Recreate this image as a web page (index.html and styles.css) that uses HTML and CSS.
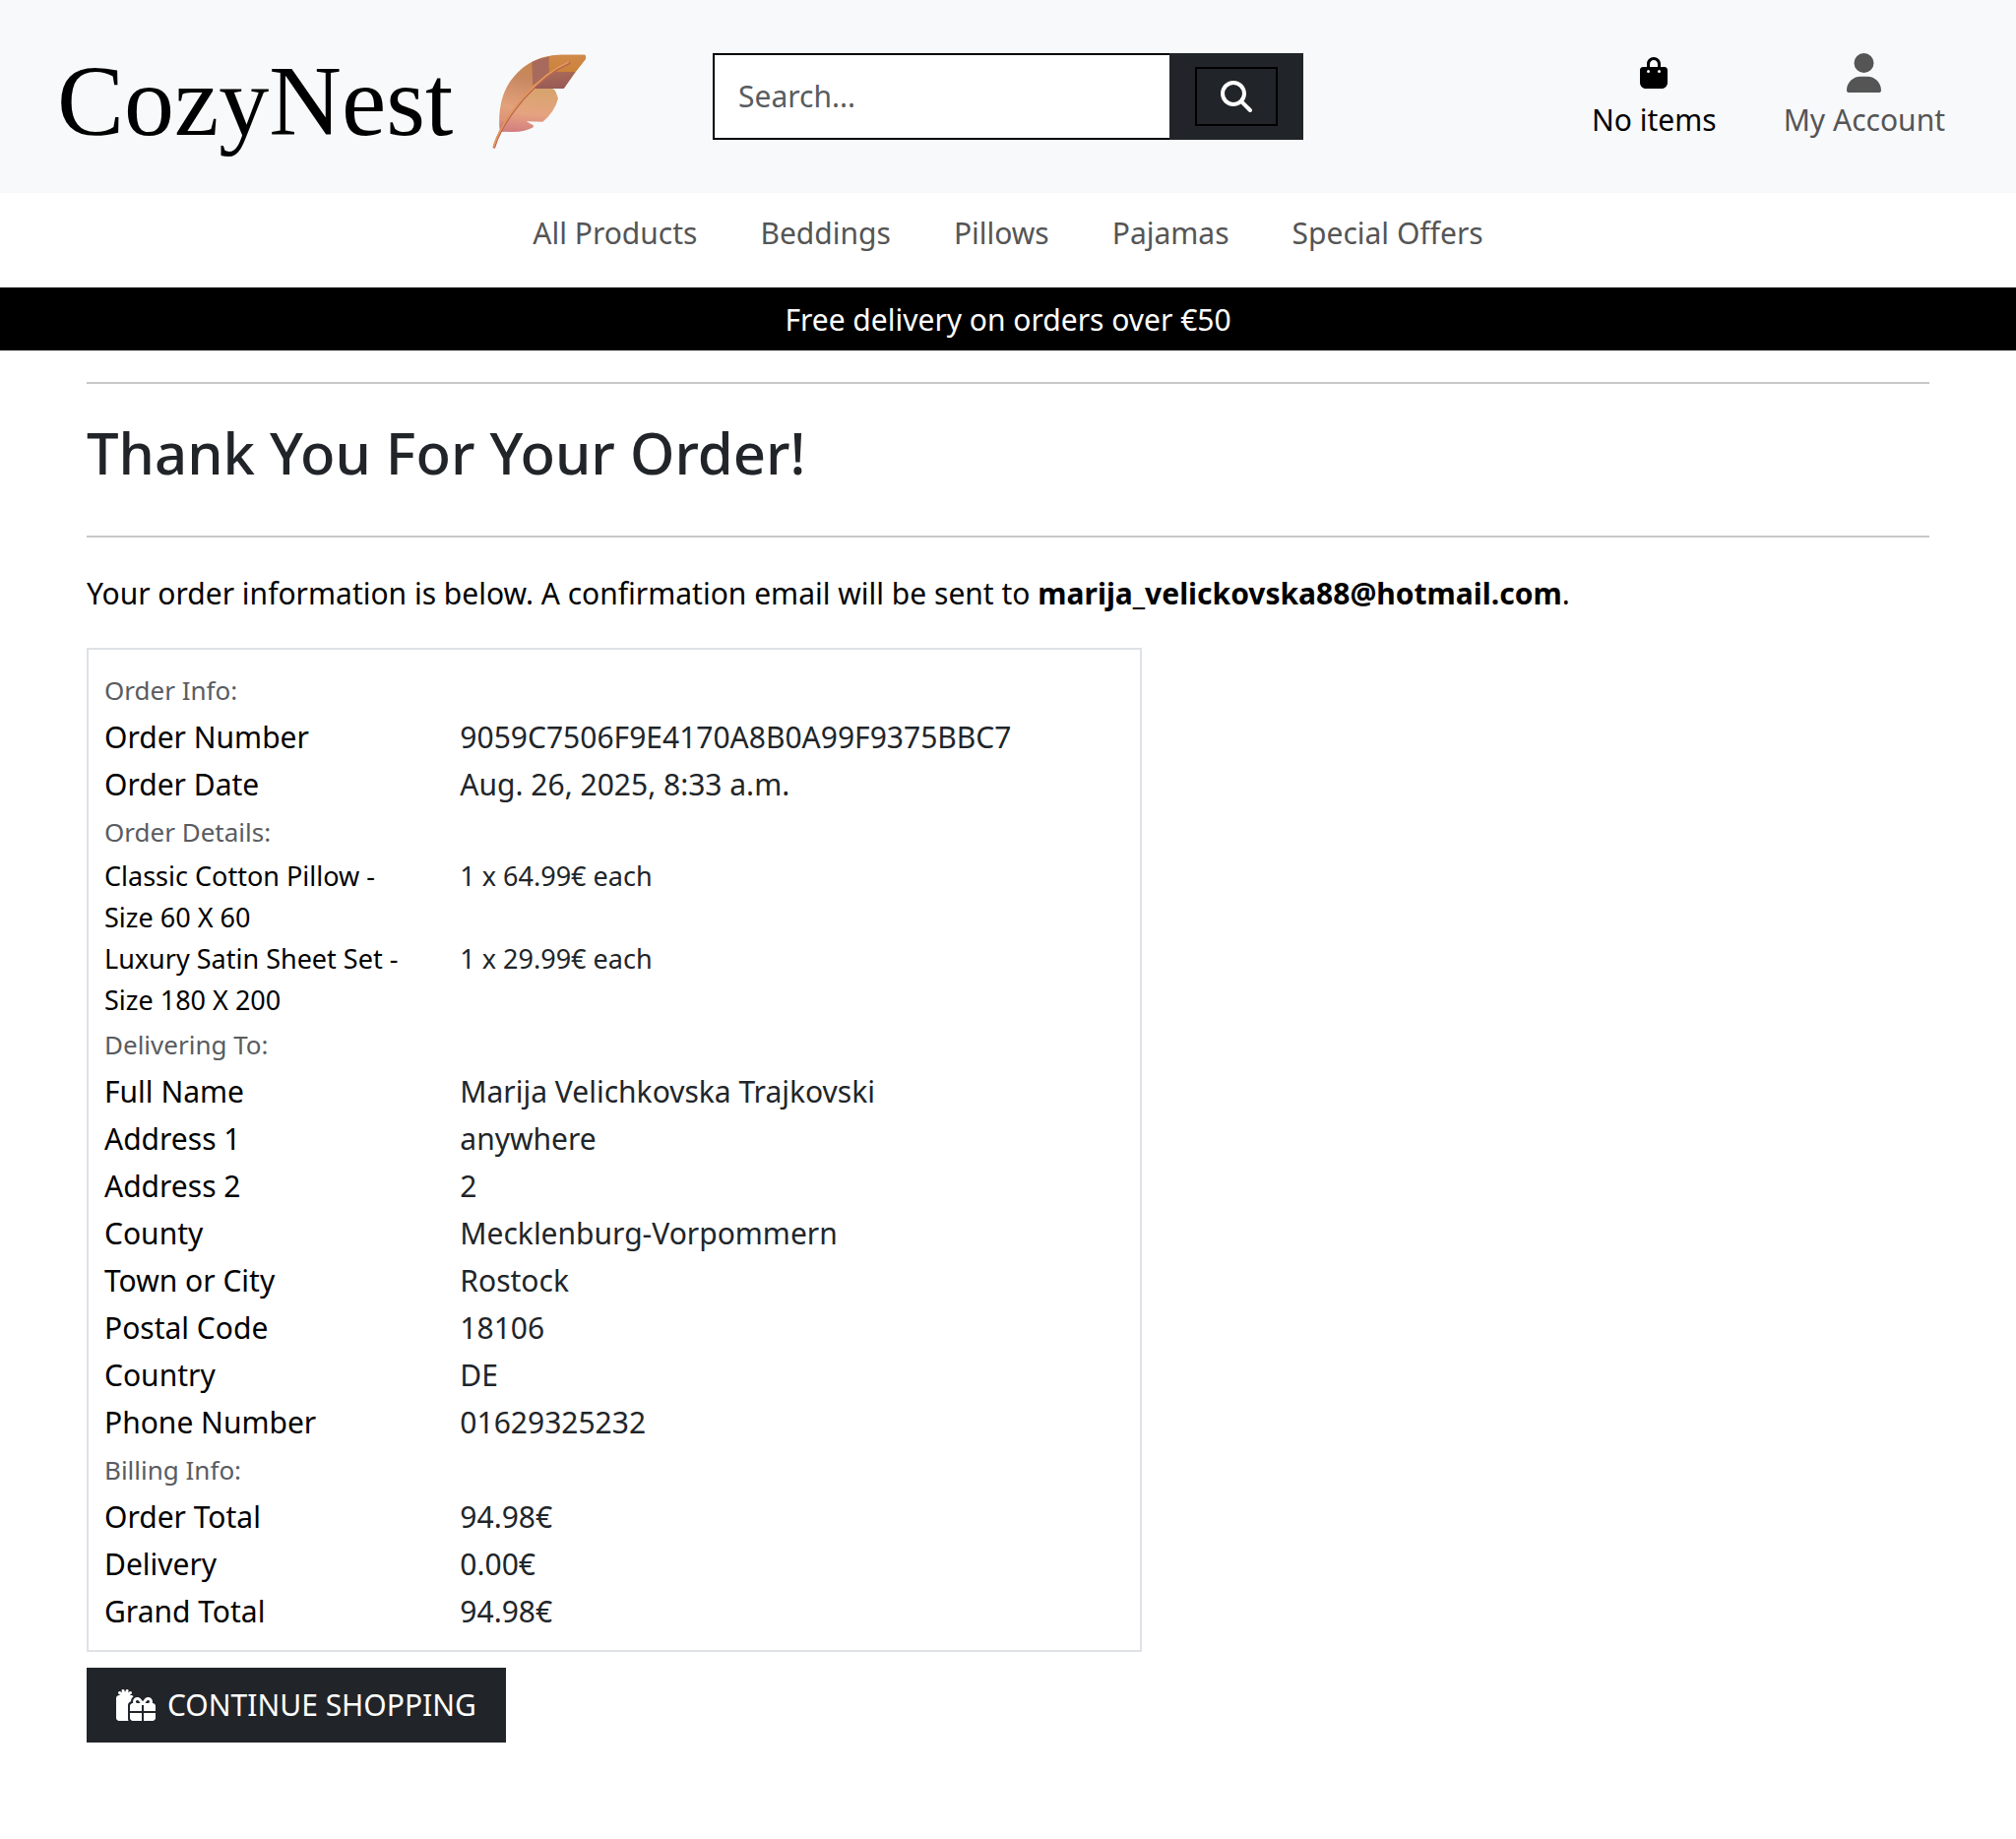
FILE: index.html
```html
<!DOCTYPE html>
<html lang="en">
<head>
  <meta charset="utf-8">
  <meta name="viewport" content="width=device-width, initial-scale=1">
  <title>CozyNest</title>
  <link rel="stylesheet" href="styles.css">
</head>
<body>
  <header class="header">
    <a class="brand" href="#">
      <span class="brand-name">CozyNest</span>
      <svg class="brand-feather" viewBox="60 48 288 288" aria-hidden="true">
        <defs>
          <linearGradient id="vane" x1="0.6" y1="0" x2="0.4" y2="1">
            <stop offset="0" stop-color="#c98546"/>
            <stop offset="0.35" stop-color="#c78860"/>
            <stop offset="0.75" stop-color="#e3a17c"/>
            <stop offset="0.92" stop-color="#dd9478"/>
            <stop offset="1" stop-color="#d27f7d"/>
          </linearGradient>
          <linearGradient id="lower" x1="0.6" y1="0" x2="0.5" y2="1">
            <stop offset="0" stop-color="#d6a46c"/>
            <stop offset="0.6" stop-color="#e5a380"/>
            <stop offset="1" stop-color="#d47f80"/>
          </linearGradient>
          <linearGradient id="tip" x1="0" y1="0" x2="0" y2="1">
            <stop offset="0" stop-color="#d08a4a"/>
            <stop offset="1" stop-color="#cb823a"/>
          </linearGradient>
          <linearGradient id="shade" x1="0" y1="0" x2="0.3" y2="1">
            <stop offset="0" stop-color="#ad6d58"/>
            <stop offset="1" stop-color="#975a56"/>
          </linearGradient>
        </defs>
        <path fill="url(#vane)" d="M82 270C78 196 98 136 150 92C178 69 212 53 262 50L342 50Q347 53 345 62L314 102L278 153L186 153L96 284L84 284Z"/>
        <path fill="url(#lower)" d="M186 151L244 153Q252 156 255 166L261 183Q250 225 214 254L164 253Q178 261 186 265L185 271Q158 287 116 285L88 284Q118 220 186 151Z"/>
        <path fill="url(#tip)" d="M233 56Q250 50 272 50L342 50Q347 53 345 62L314 102L233 102Z"/>
        <path fill="#a86a5c" d="M181 72Q206 60 233 56L233 104L184 144Z"/>
        <path fill="url(#shade)" d="M244 102L314 102L278 153L186 153Q206 126 244 102Z"/>
        <path fill="none" stroke="#b9644f" stroke-width="8" stroke-linecap="round" d="M66 331C80 282 112 234 158 180C200 133 240 98 294 75"/>
        <path fill="none" stroke="#e39a5c" stroke-width="5" stroke-linecap="round" d="M65 329C79 280 111 232 157 178C199 131 239 96 292 73"/>
      </svg>
    </a>

    <form class="search" role="search">
      <input class="search-input" type="search" name="q" placeholder="Search..." aria-label="Search">
      <div class="search-side">
        <button class="search-button" type="submit" aria-label="Search">
          <svg class="icon-search" viewBox="0 0 512 512" aria-hidden="true"><path d="M416 208c0 45.9-14.9 88.3-40 122.7L502.6 457.4c12.5 12.5 12.5 32.8 0 45.3s-32.8 12.5-45.3 0L330.7 376c-34.4 25.2-76.8 40-122.7 40C93.1 416 0 322.9 0 208S93.1 0 208 0S416 93.1 416 208zM208 352a144 144 0 1 0 0-288 144 144 0 1 0 0 288z"/></svg>
        </button>
      </div>
    </form>

    <div class="actions">
      <a class="action action-bag" href="#">
        <span class="action-icon">
          <svg class="icon-bag" viewBox="0 0 448 512" aria-hidden="true"><path d="M160 112c0-35.3 28.7-64 64-64s64 28.7 64 64v48H160V112zm-48 48H48c-26.5 0-48 21.5-48 48V416c0 53 43 96 96 96H352c53 0 96-43 96-96V208c0-26.5-21.5-48-48-48H336V112C336 50.1 285.9 0 224 0S112 50.1 112 112v48zm24 48a24 24 0 1 1 0 48 24 24 0 1 1 0-48zm152 24a24 24 0 1 1 48 0 24 24 0 1 1 -48 0z"/></svg>
        </span>
        <span>No items</span>
      </a>
      <a class="action" href="#">
        <span class="action-icon">
          <svg class="icon-user" viewBox="0 0 448 512" aria-hidden="true"><path d="M224 256A128 128 0 1 0 224 0a128 128 0 1 0 0 256zm-45.7 48C79.8 304 0 383.8 0 482.3C0 498.7 13.3 512 29.7 512H418.3c16.4 0 29.7-13.3 29.7-29.7C448 383.8 368.2 304 269.7 304H178.3z"/></svg>
        </span>
        <span>My Account</span>
      </a>
    </div>
  </header>

  <nav class="nav" aria-label="Main">
    <a class="nav-link" href="#">All Products</a>
    <a class="nav-link" href="#">Beddings</a>
    <a class="nav-link" href="#">Pillows</a>
    <a class="nav-link" href="#">Pajamas</a>
    <a class="nav-link" href="#">Special Offers</a>
  </nav>

  <p class="banner">Free delivery on orders over €50</p>

  <main class="main">
    <h1 class="title">Thank You For Your Order!</h1>
    <p class="intro">Your order information is below. A confirmation email will be sent to <strong>marija_velickovska88@hotmail.com</strong>.</p>

    <section class="order">
      <h2 class="order-heading">Order Info:</h2>
      <dl class="order-list">
        <div class="order-row"><dt>Order Number</dt><dd>9059C7506F9E4170A8B0A99F9375BBC7</dd></div>
        <div class="order-row"><dt>Order Date</dt><dd>Aug. 26, 2025, 8:33 a.m.</dd></div>
      </dl>
      <h2 class="order-heading">Order Details:</h2>
      <dl class="order-list order-items">
        <div class="order-row"><dt>Classic Cotton Pillow - Size 60 X 60</dt><dd>1 x 64.99€ each</dd></div>
        <div class="order-row"><dt>Luxury Satin Sheet Set - Size 180 X 200</dt><dd>1 x 29.99€ each</dd></div>
      </dl>
      <h2 class="order-heading">Delivering To:</h2>
      <dl class="order-list">
        <div class="order-row"><dt>Full Name</dt><dd>Marija Velichkovska Trajkovski</dd></div>
        <div class="order-row"><dt>Address 1</dt><dd>anywhere</dd></div>
        <div class="order-row"><dt>Address 2</dt><dd>2</dd></div>
        <div class="order-row"><dt>County</dt><dd>Mecklenburg-Vorpommern</dd></div>
        <div class="order-row"><dt>Town or City</dt><dd>Rostock</dd></div>
        <div class="order-row"><dt>Postal Code</dt><dd>18106</dd></div>
        <div class="order-row"><dt>Country</dt><dd>DE</dd></div>
        <div class="order-row"><dt>Phone Number</dt><dd>01629325232</dd></div>
      </dl>
      <h2 class="order-heading">Billing Info:</h2>
      <dl class="order-list">
        <div class="order-row"><dt>Order Total</dt><dd>94.98€</dd></div>
        <div class="order-row"><dt>Delivery</dt><dd>0.00€</dd></div>
        <div class="order-row"><dt>Grand Total</dt><dd>94.98€</dd></div>
      </dl>
    </section>

    <a class="continue" href="#">
      <svg class="icon-gifts" viewBox="0 0 640 512" aria-hidden="true"><path d="M200.6 32C205 19.5 198.5 5.8 186 1.4S159.8 3.5 155.4 16L144.7 46.2l-9.9-29.8C130.6 3.8 117-3 104.4 1.2S85 19 89.2 31.6l8.3 25-27.4-20c-10.7-7.8-25.7-5.4-33.5 5.3s-5.4 25.7 5.3 33.5L70.2 96H48C21.5 96 0 117.5 0 144V464c0 26.5 21.5 48 48 48H200.6c-5.4-9.4-8.6-20.3-8.6-32V256c0-29.9 20.5-55 48.2-62c1.8-31 17.1-58.2 40.1-76.1C271.7 104.7 256.9 96 240 96H217.8l28.3-20.6c10.7-7.8 13.1-22.8 5.3-33.5s-22.8-13.1-33.5-5.3L192.5 55.1 200.6 32zM363.5 185.5L393.1 224H344c-13.3 0-24-10.7-24-24c0-13.1 10.8-24 24.2-24c7.6 0 14.7 3.5 19.3 9.5zM272 200c0 8.4 1.4 16.5 4.1 24H272c-26.5 0-48 21.5-48 48v80H416V256h32v96H640V272c0-26.5-21.5-48-48-48h-4.1c2.7-7.5 4.1-15.6 4.1-24c0-39.9-32.5-72-72.2-72c-22.4 0-43.6 10.4-57.3 28.2L432 195.8l-30.5-39.6c-13.7-17.8-35-28.2-57.3-28.2c-39.7 0-72.2 32.1-72.2 72zM224 464c0 26.5 21.5 48 48 48H416V384H224v80zm224 48H592c26.5 0 48-21.5 48-48V384H448V512zm96-312c0 13.3-10.7 24-24 24H470.9l29.6-38.5c4.6-5.9 11.7-9.5 19.3-9.5c13.4 0 24.2 10.9 24.2 24z"/></svg>
      <span>CONTINUE SHOPPING</span>
    </a>
  </main>
</body>
</html>
```

FILE: styles.css
```css
*,
*::before,
*::after {
  box-sizing: border-box;
}

body {
  margin: 0;
  background: #fff;
  color: #212529;
  font-family: "Noto Sans", "Open Sans", sans-serif;
  font-size: 30px;
  line-height: 48px;
}

a {
  color: inherit;
  text-decoration: none;
}

svg {
  display: block;
  fill: currentColor;
}

/* Header */
.header {
  display: grid;
  grid-template-columns: 1fr 600px 1fr;
  align-items: center;
  padding: 50px 58px;
  background: #f8f9fa;
}

.brand {
  display: flex;
  align-items: center;
  gap: 40px;
  height: 96px;
  color: #000;
}

.brand-name {
  padding-top: 10px;
  font-family: "Liberation Serif", serif;
  font-size: 102px;
  line-height: 96px;
}

.brand-feather {
  width: 96px;
  height: 96px;
  margin-top: 10px;
}

.search {
  display: flex;
  height: 88px;
}

.search-input {
  flex: 1;
  min-width: 0;
  padding: 0 24px;
  border: 2px solid #000;
  border-right: 0;
  border-radius: 0;
  background: #fff;
  color: #212529;
  font: inherit;
  appearance: none;
}

.search-input::placeholder {
  color: #595c5f;
  opacity: 1;
}

.search-side {
  display: flex;
  align-items: center;
  padding: 0 26px;
  background: #212529;
}

.search-button {
  display: flex;
  align-items: center;
  justify-content: center;
  width: 84px;
  height: 60px;
  padding: 0;
  border: 2px solid #000;
  background: #212529;
  color: #fff;
}

.icon-search {
  width: 32px;
  height: 32px;
}

.actions {
  display: flex;
  justify-content: flex-end;
  gap: 68px;
  padding-right: 14px;
}

.action {
  display: flex;
  flex-direction: column;
  align-items: center;
  color: #555;
}

.action-bag {
  color: #000;
}

.action-icon {
  display: flex;
  align-items: center;
  height: 48px;
}

.icon-bag {
  width: 28px;
  height: 32px;
}

.icon-user {
  width: 35px;
  height: 40px;
}

/* Navigation and banner */
.nav {
  display: flex;
  justify-content: center;
  gap: 64px;
  padding: 17px 24px 31px;
}

.nav-link {
  color: #555;
}

.banner {
  margin: 0;
  padding: 9px 24px 7px;
  background: #000;
  color: #fff;
  text-align: center;
}

/* Order confirmation */
.main {
  padding: 32px 88px 98px;
}

.title {
  margin: 0;
  padding: 33px 0 47px;
  border: solid #c7c8c9;
  border-width: 2px 0;
  font-size: 58px;
  font-weight: 500;
  line-height: 74px;
}

.intro {
  margin: 33px 0 31px;
  color: #000;
}

.order {
  width: calc(100% * 7 / 12 - 20px);
  padding: 17px 16px 15px;
  border: 2px solid #dee2e6;
}

.order-heading {
  margin: 0;
  color: #595c5f;
  font-size: 26px;
  font-weight: 400;
  line-height: 48px;
}

.order-list {
  margin: 0;
}

.order-row {
  display: grid;
  grid-template-columns: 1fr 2fr;
  column-gap: 24px;
}

.order-row dt {
  padding-right: 24px;
  color: #000;
}

.order-row dd {
  margin: 0;
}

.order-items {
  font-size: 27px;
  line-height: 42px;
}

.continue {
  display: inline-flex;
  align-items: center;
  gap: 12px;
  margin-top: 16px;
  padding: 14px 30px;
  background: #212529;
  color: #fff;
}

.icon-gifts {
  width: 40px;
  height: 32px;
}
```
